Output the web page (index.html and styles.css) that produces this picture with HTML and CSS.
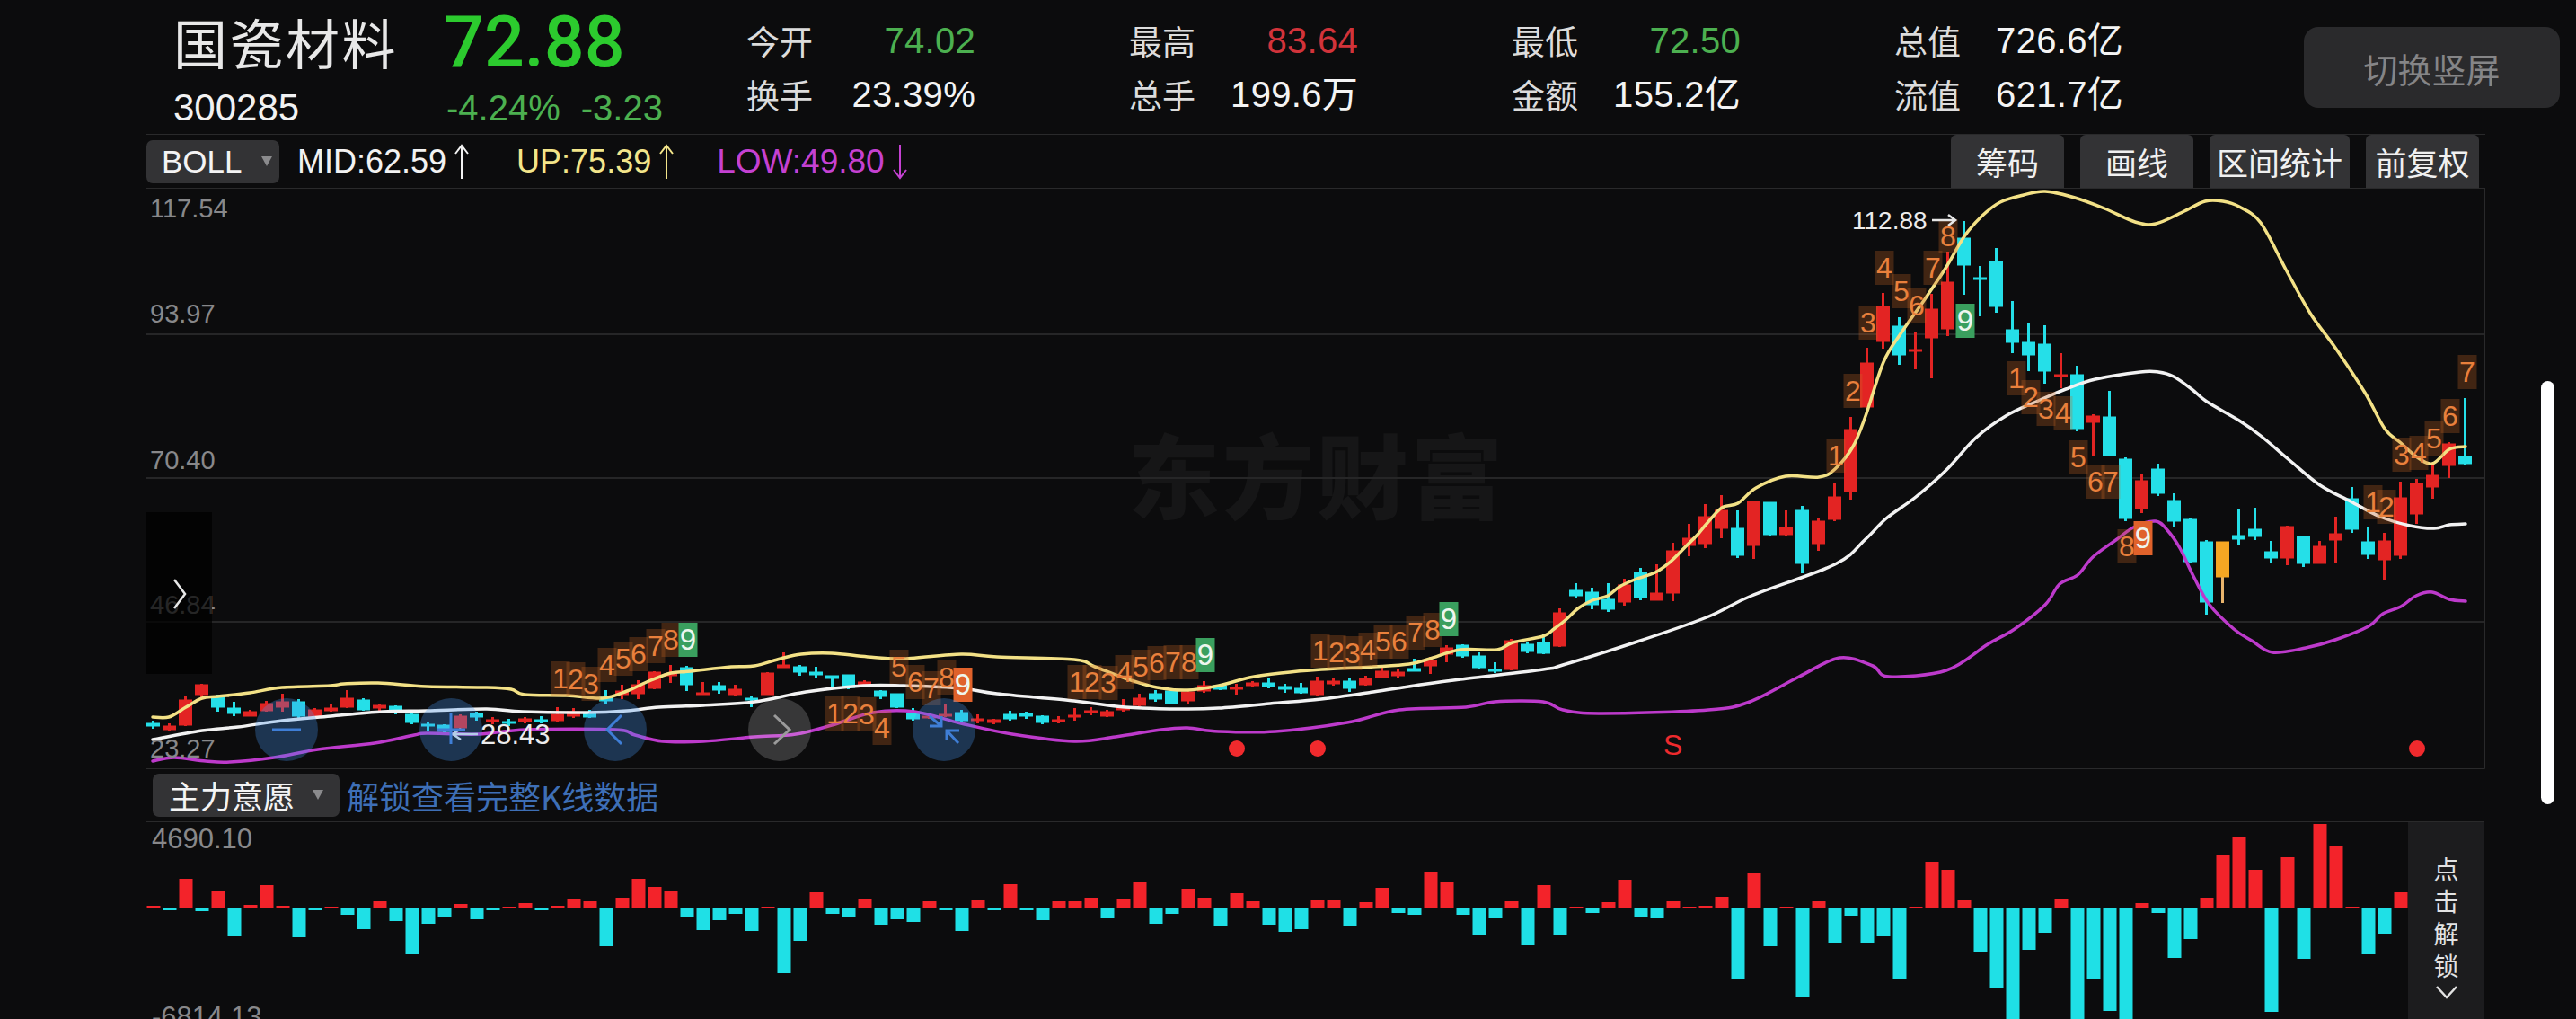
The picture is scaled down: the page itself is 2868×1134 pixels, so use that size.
FILE: index.html
```html
<!DOCTYPE html>
<html lang="zh-CN">
<head>
<meta charset="utf-8">
<title>国瓷材料 K线</title>
<link rel="stylesheet" href="styles.css">
</head>
<body>
<div class="page">
  <header class="header">
    <div class="ident">
      <div class="name">国瓷材料</div>
      <div class="code">300285</div>
    </div>
    <div class="quote">
      <div class="price">72.88</div>
      <div class="change"><span>-4.24%</span><span>-3.23</span></div>
    </div>
    <div class="stats">
      <div class="stat"><div class="row"><span class="k">今开</span><span class="v down">74.02</span></div><div class="row"><span class="k">换手</span><span class="v">23.39%</span></div></div>
      <div class="stat"><div class="row"><span class="k">最高</span><span class="v up">83.64</span></div><div class="row"><span class="k">总手</span><span class="v">199.6万</span></div></div>
      <div class="stat"><div class="row"><span class="k">最低</span><span class="v down">72.50</span></div><div class="row"><span class="k">金额</span><span class="v">155.2亿</span></div></div>
      <div class="stat"><div class="row"><span class="k">总值</span><span class="v">726.6亿</span></div><div class="row"><span class="k">流值</span><span class="v">621.7亿</span></div></div>
    </div>
    <button class="switch">切换竖屏</button>
  </header>

  <div class="toolbar">
    <div class="select select-boll"><span>BOLL</span><i class="caret"></i></div>
    <div class="ind ind-mid"><span>MID:62.59</span><svg class="arrow" viewBox="0 0 20 40"><path d="M10 39V3M3 11L10 2L17 11"/></svg></div>
    <div class="ind ind-up"><span>UP:75.39</span><svg class="arrow" viewBox="0 0 20 40"><path d="M10 39V3M3 11L10 2L17 11"/></svg></div>
    <div class="ind ind-low"><span>LOW:49.80</span><svg class="arrow" viewBox="0 0 20 40"><path d="M10 1V37M3 29L10 38L17 29"/></svg></div>
    <div class="tools">
      <div class="tool tool-2">筹码</div>
      <div class="tool tool-2">画线</div>
      <div class="tool tool-4">区间统计</div>
      <div class="tool tool-2">前复权</div>
    </div>
  </div>

  <div class="main">
    <svg id="kline" class="kline" viewBox="162 210 2605 646">
      <text class="wm" x="1256" y="570">东方财富</text>
      <path class="grid" d="M162 372H2766M162 532H2766M162 692H2766"/>
      <path class="frame" d="M162.5 210V855.5H2766.5V210"/>
      <g id="candles"></g>
      <g id="lines"></g>
      <g id="labels"></g>
      <text class="axis" x="167" y="242">117.54</text>
      <text class="axis" x="167" y="359">93.97</text>
      <text class="axis" x="167" y="522">70.40</text>
      <text class="axis" x="167" y="683">46.84</text>
      <text class="axis" x="167" y="843">23.27</text>
      <text class="mark" x="2062" y="255">112.88</text>
      <path class="mark-arrow" d="M2151 245H2176M2169 239L2177 245L2169 251"/>
      <text class="mark mark-low" x="535" y="828">28.43</text>
      <path class="mark-arrow" d="M532 817H505M513 811L504 817L513 823"/>
      <circle class="dot" cx="1377" cy="833" r="9"/>
      <circle class="dot" cx="1467" cy="833" r="9"/>
      <circle class="dot" cx="2691" cy="833" r="9"/>
      <text class="sig" x="1852" y="840">S</text>
      <rect class="shade" x="163" y="570" width="73" height="180"/>
      <path class="shade-icon" d="M194 645L206 661L194 677"/>
      <circle class="pad" cx="319" cy="812" r="35"/>
      <path class="pad-icon" d="M303 812H335"/>
      <circle class="pad" cx="502" cy="812" r="35"/>
      <path class="pad-icon" d="M486 812H518M502 794V828"/>
      <circle class="pad" cx="685" cy="812" r="35"/>
      <path class="pad-icon" d="M692 796L676 812L692 828"/>
      <circle class="pad pad-grey" cx="868" cy="812" r="35"/>
      <path class="pad-icon pad-icon-grey" d="M862 796L879 812L862 828"/>
      <circle class="pad" cx="1051" cy="812" r="35"/>
      <path class="pad-icon" d="M1035 797L1048 808M1035 808H1048V797M1054 813L1067 827M1054 823V813H1068"/>
    </svg>
  </div>

  <div class="subbar">
    <div class="select select-main"><span>主力意愿</span><i class="caret"></i></div>
    <a class="unlock-link">解锁查看完整K线数据</a>
  </div>

  <div class="sub">
    <svg id="bars" class="bars" viewBox="162 915 2519 219">
      <path class="frame" d="M162.5 915V1134"/>
      <g id="barset"></g>
      <text class="axis axis-sub" x="169" y="944">4690.10</text>
      <text class="axis axis-sub" x="169" y="1142">-6814.13</text>
    </svg>
    <div class="lock">
      <span>点</span><span>击</span><span>解</span><span>锁</span>
      <svg class="lock-chevron" viewBox="0 0 26 16"><path d="M2 2L13 14L24 2"/></svg>
    </div>
  </div>

  <div class="scrollbar"></div>
</div>
<script src="chart.js"></script>
</body>
</html>
```
FILE: styles.css
```css
* { box-sizing: border-box; }
html, body { margin: 0; padding: 0; background: #0c0c0d; }
body { font-family: "Liberation Sans", "Noto Sans CJK SC", sans-serif; color: #fff; }
.page { position: relative; width: 2868px; height: 1134px; overflow: hidden; background: #0c0c0d; }

.header { display: flex; height: 149px; padding-left: 193px; }
.ident { width: 301px; }
.name { height: 92px; line-height: 92px; font-size: 60px; letter-spacing: 2.5px; color: #e8e8e8; font-family: "Noto Sans CJK SC", sans-serif; }
.code { height: 56px; line-height: 56px; font-size: 42px; color: #f2f2f2; }
.quote { width: 337px; }
.price { height: 94px; line-height: 94px; font-size: 79px; font-family: Roboto, "Liberation Sans", sans-serif; font-weight: 500; color: #2ccb2e; }
.change { display: flex; gap: 23px; height: 52px; line-height: 52px; font-size: 40px; color: #4cb050; padding-left: 3px; }
.stats { display: flex; gap: 171px; padding-top: 15px; }
.stat { width: 255px; }
.row { display: flex; justify-content: space-between; height: 60px; line-height: 60px; }
.k { font-size: 37px; color: #dcdcdc; font-family: "Noto Sans CJK SC", sans-serif; }
.v { font-size: 40px; letter-spacing: 0.3px; color: #f4f4f4; }
.v.down { color: #4cb050; }
.v.up { color: #d2333a; }
.switch { width: 285px; height: 90px; margin: 30px 0 0 201px; border: 0; border-radius: 16px; background: #2a2a2c; color: #858587; font-size: 38px; font-family: "Noto Sans CJK SC", sans-serif; }

.toolbar { display: flex; align-items: center; width: 2605px; height: 61px; margin-left: 162px; padding: 0 7px 0 1px; border-top: 1px solid #2a2a2b; border-bottom: 1px solid #2a2a2b; font-size: 36px; }
.select { display: flex; align-items: center; background: #333335; border-radius: 7px; height: 48px; color: #f4f4f4; }
.select-boll { width: 148px; padding-left: 17px; gap: 21px; font-size: 35px; }
.caret { width: 0; height: 0; border-left: 6px solid transparent; border-right: 6px solid transparent; border-top: 11px solid #8b8b8d; }
.ind { display: flex; align-items: center; }
.arrow { width: 20px; height: 40px; margin-left: 7px; }
.arrow path { fill: none; stroke: currentColor; stroke-width: 2; }
.ind-mid { color: #f2f2f2; margin-left: 20px; }
.ind-up { color: #f3e58a; margin-left: 51px; }
.ind-low { color: #c541d2; margin-left: 46px; font-size: 37px; }
.tools { display: flex; gap: 18px; margin-left: auto; align-self: stretch; }
.tool { display: flex; align-items: center; justify-content: center; background: #333335; border-radius: 6px 6px 0 0; font-size: 35px; color: #f0f0f0; font-family: "Noto Sans CJK SC", sans-serif; }
.tool-2 { width: 126px; }
.tool-4 { width: 156px; }

.main { height: 645px; }
.kline { display: block; margin-left: 162px; width: 2605px; height: 646px; overflow: hidden; }
.wm { font-family: "Noto Sans CJK SC", sans-serif; font-weight: 900; font-size: 102px; letter-spacing: 3px; fill: #161617; }
.grid { stroke: #262627; stroke-width: 2; fill: none; }
.frame { stroke: #2a2a2b; stroke-width: 1; fill: none; }
.axis { font-size: 29px; fill: #88888a; }
.axis-sub { font-size: 31px; }
.mark { font-size: 28px; fill: #ececec; }
.mark-low { font-size: 31px; }
.mark-arrow { fill: none; stroke: #e6e6e6; stroke-width: 2.5; }
.dot { fill: #f02a2d; }
.sig { font-size: 32px; fill: #ee2a2d; }
.shade { fill: #000; opacity: 0.72; }
.shade-icon { fill: none; stroke: #e8e8e8; stroke-width: 2.5; }
.pad { fill: rgba(70, 150, 240, 0.3); }
.pad-grey { fill: rgba(255, 255, 255, 0.18); }
.pad-icon { fill: none; stroke: #3f7ed6; stroke-width: 3; }
.pad-icon-grey { stroke: #9a9a9a; }

.wick { stroke-width: 3; }
.c-r { fill: #e32423; stroke: #e32423; }
.c-c { fill: #25dfe8; stroke: #25dfe8; }
.c-o { fill: #f5a623; stroke: #f5a623; }
.wick-o { stroke: #e8b46c; }
.ln { fill: none; stroke-width: 3.5; stroke-linejoin: round; stroke-linecap: round; }
.ln-up { stroke: #f3e186; }
.ln-mid { stroke: #f2f2f2; }
.ln-low { stroke: #bd3acb; }
.td-box { fill: rgba(205, 105, 35, 0.28); }
.td-box-g { fill: #3a9f5e; }
.td-box-o { fill: #e0622b; }
.td-text { font-size: 32px; fill: #e9803c; text-anchor: middle; }
.td-text-w { fill: #eef6ee; font-size: 33px; }

.subbar { display: flex; align-items: center; height: 59px; padding-left: 170px; }
.select-main { width: 208px; padding-left: 18px; gap: 20px; font-size: 35px; font-family: "Noto Sans CJK SC", sans-serif; }
.unlock-link { margin-left: 8px; font-size: 36px; color: #3e6fb6; font-family: "Noto Sans CJK SC", sans-serif; }

.sub { display: flex; width: 2604px; height: 220px; margin-left: 162px; border-top: 1px solid #2a2a2b; }
.bars { display: block; width: 2519px; height: 219px; }
.bar-r { fill: #f3232a; }
.bar-c { fill: #1fe0e6; }
.lock { display: flex; flex-direction: column; align-items: center; width: 85px; padding-top: 33px; background: #1c1c1e; font-size: 28px; line-height: 36px; color: #e2e2e2; font-family: "Noto Sans CJK SC", sans-serif; }
.lock-chevron { width: 26px; height: 16px; margin-top: 4px; }
.lock-chevron path { fill: none; stroke: #e2e2e2; stroke-width: 2.5; }

.scrollbar { position: absolute; left: 2829px; top: 424px; width: 15px; height: 471px; border-radius: 8px; background: #fff; }
```
FILE: chart.js
```js
var NS = 'http://www.w3.org/2000/svg';
function el(parent, tag, attrs, text) {
  var n = document.createElementNS(NS, tag);
  for (var k in attrs) n.setAttribute(k, attrs[k]);
  if (text !== undefined) n.textContent = text;
  parent.appendChild(n);
  return n;
}

// Catmull-Rom spline through the listed points
function smooth(str) {
  var p = str.split(' ').map(function (s) { return s.split(',').map(Number); });
  var d = 'M' + p[0][0] + ' ' + p[0][1];
  for (var i = 0; i < p.length - 1; i++) {
    var a = p[Math.max(i - 1, 0)], b = p[i], c = p[i + 1], e = p[Math.min(i + 2, p.length - 1)];
    d += 'C' + (b[0] + (c[0] - a[0]) / 6).toFixed(1) + ' ' + (b[1] + (c[1] - a[1]) / 6).toFixed(1) + ' ' +
         (c[0] - (e[0] - b[0]) / 6).toFixed(1) + ' ' + (c[1] - (e[1] - b[1]) / 6).toFixed(1) + ' ' + c[0] + ' ' + c[1];
  }
  return d;
}

// colour, body top, body bottom, wick top, wick bottom
var candles = [
'c805,808,802,811','r808,812,805,813','r779,807,775,808','r762,773,761,776','c776,787,773,792','c788,794,781,797','r792,797,790,797','r783,791,780,792','r781,787,772,792','c781,797,778,799',
'r790,798,788,799','r788,791,784,792','r777,787,768,788','c779,790,777,791','r785,788,783,792','c786,792,785,795','c795,804,793,806','c806,808,803,813','c807,814,806,816','r797,810,795,813',
'c794,798,792,802','r801,803,798,806','c803,805,800,808','r800,803,798,805','c801,803,797,805','r795,802,787,803','r792,797,788,799','c793,798,790,799','c776,780,768,783','r769,773,762,778',
'r762,772,757,778','r748,766,747,767','r750,751,740,760','c743,762,741,769','r771,773,759,773','c763,768,759,772','r767,773,762,775','c777,779,774,787','r749,773,748,773','r740,743,726,743',
'c742,748,740,752','c748,751,742,754','c752,755,752,766','c751,765,751,767','r759,763,757,764','c769,775,768,778','c772,787,772,788','c794,800,788,802','r797,798,795,800','r795,796,783,798',
'c793,802,790,803','r800,802,795,805','r801,804,800,806','c795,800,791,802','c794,797,792,800','c797,804,796,806','r801,803,797,805','r796,798,788,802','r791,793,787,796','r792,797,790,798',
'r788,790,778,792','r777,785,772,786','c772,778,768,781','c769,783,767,784','r770,780,768,784','r763,769,758,771','c763,767,762,768','r765,767,761,773','r760,763,758,765','c760,764,755,766',
'c764,767,761,771','c766,771,760,772','r758,773,753,775','r758,761,755,763','c758,766,755,770','r755,762,752,763','r747,754,743,755','r748,752,745,754','c744,747,733,747','r735,741,731,750',
'r721,728,718,737','c718,730,717,732','c730,743,726,745','c745,747,737,749','r713,745,711,746','c717,725,715,727','c715,727,705,728','r682,719,677,720','c657,663,649,666','c659,673,654,678',
'c667,678,649,681','r651,670,644,674','c637,665,632,668','r660,668,628,668','r613,660,604,669','r599,607,583,619','r575,605,561,610','r568,588,551,599','c588,618,568,621','r558,607,557,622',
'c559,595,559,596','r587,595,568,597','c568,627,563,638','r580,605,577,613','r553,578,537,580','r478,547,464,556','r404,453,387,453','r341,380,326,388','c363,395,353,406','r389,391,369,411',
'r344,376,327,421','r314,366,280,374','c265,295,246,328','c309,311,296,352','c291,341,276,348','c367,381,335,393','c381,395,360,413','c383,413,362,427','r417,419,393,432','c417,477,407,480',
'r463,470,461,508','c464,507,435,507','c511,577,509,580','r535,566,527,571','c522,549,516,552','c557,580,549,587','c578,625,576,627','c603,670,601,684','o603,642,603,671','c596,600,567,606',
'c589,597,565,601','c614,621,602,627','r586,621,585,629','c597,627,596,631','r608,627,602,627','r594,601,575,626','c555,589,542,593','c603,617,587,622','r602,623,593,645','r554,618,536,622',
'r538,572,533,583','r529,542,517,555','r494,518,492,532','c508,516,443,518'
];

var upLine = '170,798 188,798 207,787 225,777 243,775 278,771 314,765 368,763 383,761 421,760 475,764 542,765 569,767 584,773 631,774 671,777 698,769 720,759 747,749 769,747 814,742 840,741 869,733 892,728 926,727 966,731 1006,733 1070,728 1110,731 1196,734 1219,742 1253,755 1288,765 1322,768 1357,763 1391,754 1426,749 1471,745 1529,742 1569,739 1592,733 1626,723 1667,723 1684,715 1718,708 1730,700 1743,690 1757,677 1773,668 1790,663 1803,653 1820,645 1843,637 1860,625 1877,608 1890,595 1900,583 1917,565 1935,560 1955,543 1988,530 2025,531 2043,522 2063,497 2077,463 2097,403 2117,370 2143,333 2167,297 2187,263 2207,240 2227,225 2253,217 2277,213 2310,220 2343,232 2377,247 2400,249 2430,236 2455,224 2475,224 2493,230 2517,248 2545,300 2573,350 2600,387 2633,437 2655,477 2673,493 2690,508 2708,516 2727,500 2745,497';
var midLine = '170,823 225,813 265,809 314,802 368,797 426,792 475,791 542,789 582,792 653,793 698,791 734,787 783,785 840,781 897,770 961,763 1006,763 1070,766 1110,772 1196,780 1253,787 1316,789 1357,788 1414,783 1471,778 1529,770 1575,763 1626,756 1718,745 1740,740 1820,715 1900,687 1950,663 2043,628 2077,600 2100,577 2133,553 2167,523 2200,487 2233,463 2267,447 2300,433 2333,422 2383,414 2403,414 2420,419 2440,433 2457,447 2493,468 2517,485 2550,513 2583,540 2617,558 2650,575 2683,585 2710,588 2727,584 2745,583';
var lowLine = '170,847 194,843 229,847 256,848 305,843 354,834 417,827 461,818 475,816 533,817 586,812 685,812 707,818 738,825 783,825 840,820 886,817 926,807 972,793 1018,792 1070,805 1127,817 1196,825 1242,820 1293,812 1322,810 1357,814 1420,814 1500,804 1558,790 1632,787 1664,781 1718,781 1740,790 1783,794 1902,790 1948,781 2003,753 2048,732 2085,741 2103,753 2167,746 2213,717 2243,700 2277,673 2293,650 2313,640 2330,620 2357,600 2377,586 2400,580 2413,590 2427,610 2443,643 2460,673 2487,700 2507,713 2530,726 2567,721 2600,712 2637,697 2653,683 2673,675 2690,663 2708,659 2727,667 2745,669';

// digit, centre x, centre y, kind
var labels = [
[1,624,755],[2,641,756],[3,658,761],[4,676,740],[5,694,733],[6,711,728],[7,730,719],[8,747,712],[9,766,712,'g'],
[1,929,794],[2,947,794],[3,965,795],[4,982,810],[5,1001,742],[6,1019,759],[7,1037,766],[8,1054,754],[9,1072,762,'o'],
[1,1199,759],[2,1216,759],[3,1234,760],[4,1252,748],[5,1270,742],[6,1288,738],[7,1306,737],[8,1324,737],[9,1342,729,'g'],
[1,1470,724],[2,1488,726],[3,1506,727],[4,1523,723],[5,1540,714],[6,1558,714],[7,1576,704],[8,1595,701],[9,1613,689,'g'],
[1,2044,507],[2,2063,435],[3,2080,359],[4,2098,298],[5,2117,324],[6,2134,340],[7,2152,298],[8,2169,263],[9,2188,357,'g'],
[1,2245,421],[2,2261,442],[3,2278,455],[4,2297,460],[5,2314,509],[6,2333,536],[7,2350,536],[8,2368,608],[9,2386,599,'o'],
[1,2642,559],[2,2657,564],[3,2674,506],[4,2693,504],[5,2710,488],[6,2728,463],[7,2747,414]
];

// height above (+) or below (-) the zero line
var bars = [3,-1,33,-3,20,-31,4,26,3,-32,-1,2,-7,-23,8,-14,-51,-17,-9,5,-12,-1,2,6,-1,3,11,8,-42,12,33,24,20,-10,-24,-13,-6,-25,1,-72,-36,18,-6,-10,11,-18,-12,-15,8,-1,-25,9,-1,27,-2,-13,8,8,12,-11,11,30,-17,-6,22,12,-19,17,8,-18,-26,-23,9,9,-20,7,23,-5,-7,41,30,-7,-30,-11,8,-41,26,-30,2,-5,7,32,-10,-11,8,1,3,13,-78,40,-42,0,-98,8,-38,-8,-38,-31,-79,1,52,43,9,-48,-88,-125,-46,-27,11,-130,-79,-114,-130,6,-5,-55,-34,12,59,79,43,-115,57,-56,94,70,0,-51,-28,18];

var g = document.getElementById('candles');
candles.forEach(function (s, i) {
  var kind = s.charAt(0);
  var v = s.slice(1).split(',').map(Number);
  var x = 170.5 + 18 * i;
  el(g, 'line', { x1: x, x2: x, y1: v[2], y2: v[3], 'class': 'wick c-' + kind + (kind === 'o' ? ' wick-o' : '') });
  el(g, 'rect', { x: x - 7, y: v[0], width: 14, height: Math.max(v[1] - v[0], 2), 'class': 'c-' + kind });
});

var lg = document.getElementById('lines');
el(lg, 'path', { d: smooth(upLine), 'class': 'ln ln-up' });
el(lg, 'path', { d: smooth(midLine), 'class': 'ln ln-mid' });
el(lg, 'path', { d: smooth(lowLine), 'class': 'ln ln-low' });

var tg = document.getElementById('labels');
labels.forEach(function (t) {
  var kind = t[3];
  el(tg, 'rect', { x: t[1] - 10.5, y: t[2] - 19, width: 21, height: 38, 'class': 'td-box' + (kind ? ' td-box-' + kind : '') });
});
labels.forEach(function (t) {
  el(tg, 'text', { x: t[1], y: t[2] + 11, 'class': 'td-text' + (t[3] ? ' td-text-w' : '') }, String(t[0]));
});

var bg = document.getElementById('barset');
bars.forEach(function (h, i) {
  var x = 171 + 18 * i;
  var a = Math.max(Math.abs(h), 2);
  el(bg, 'rect', { x: x - 7.5, y: h >= 0 ? 1011 - a : 1011, width: 15, height: a, 'class': h >= 0 ? 'bar-r' : 'bar-c' });
});
```
